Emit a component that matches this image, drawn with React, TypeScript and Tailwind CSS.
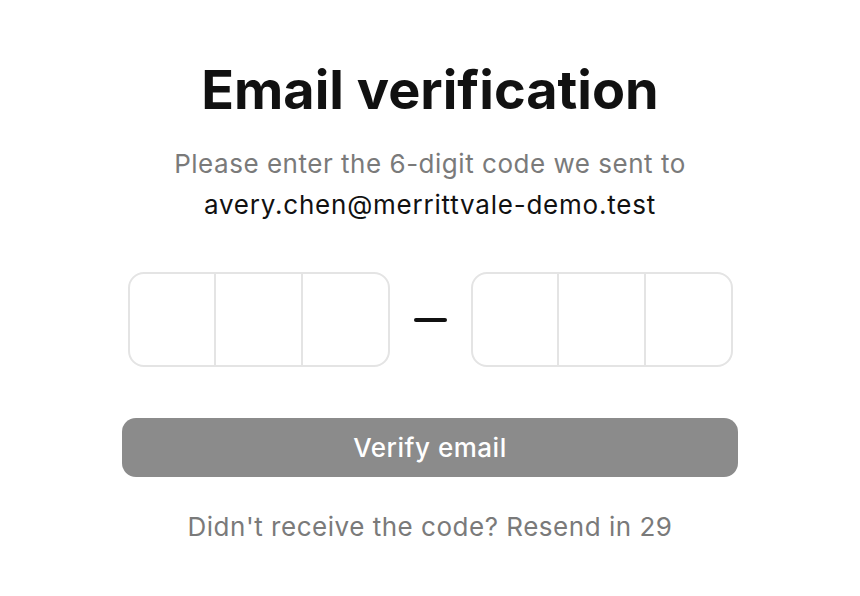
import React from "react";

function Group() {
  return (
    <div className="flex h-[95px] w-[262px] rounded-[16px] border-2 border-[#e4e4e4]">
      <div className="flex-1 border-r-2 border-[#e4e4e4]" />
      <div className="flex-1 border-r-2 border-[#e4e4e4]" />
      <div className="flex-1" />
    </div>
  );
}

export default function App() {
  return (
    <div className="flex h-[596px] w-[860px] flex-col items-center bg-white font-['Inter',sans-serif]">
      <h1 className="mt-[62px] text-[54px] font-bold leading-[56px] tracking-[0em] text-[#111111]">
        Email verification
      </h1>
      <p className="mt-[25px] text-center text-[26px] leading-[41px] tracking-[0.02em] text-[#7a7a7a]">
        Please enter the 6-digit code we sent to
        <br />
        <span className="tracking-[0.03em] text-[#111111]">avery.chen@merrittvale-demo.test</span>
      </p>
      <div className="mt-[47px] flex items-center gap-[24px]">
        <Group />
        <div className="h-[4px] w-[33px] rounded-full bg-[#111111]" />
        <Group />
      </div>
      <button className="mt-[51px] flex h-[59px] w-[616px] items-center justify-center rounded-[14px] bg-[#8b8b8b] text-[26px] font-medium tracking-[0.02em] text-white">
        Verify email
      </button>
      <p className="mt-[29px] text-[26px] leading-[41px] tracking-[0.02em] text-[#7a7a7a]">
        Didn't receive the code? Resend in 29
      </p>
    </div>
  );
}
